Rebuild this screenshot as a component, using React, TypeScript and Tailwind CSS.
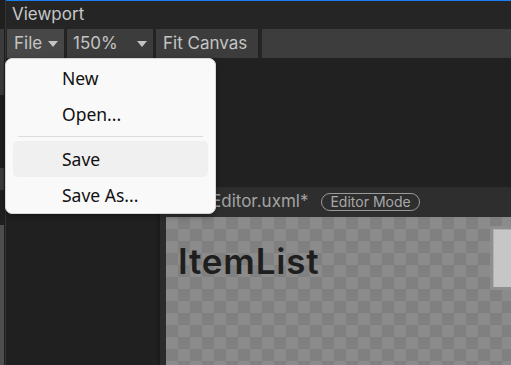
import React from "react";

function Caret() {
  return (
    <svg width="10" height="6" viewBox="0 0 10 6" className="shrink-0">
      <path d="M0 0 L10 0 L5 6 Z" fill="#c4c4c4" />
    </svg>
  );
}

const menuItems = [
  { label: "New" },
  { label: "Open..." },
  { sep: true },
  { label: "Save", active: true },
  { label: "Save As..." },
];

function FileMenu() {
  return (
    <div className="absolute left-[5px] top-[58px] w-[211px] h-[156px] rounded-[7px] bg-[#f9f9f9] border border-[#d6d6d6] shadow-[0_2px_6px_rgba(0,0,0,0.35)] pt-[1px] font-['Noto_Sans',sans-serif] text-[17.5px] text-[#111]">
      {menuItems.map((item, i) =>
        item.sep ? (
          <div key={i} className="h-[9px] flex items-center px-[12px]">
            <div className="h-px w-full bg-[#dcdcdc]" />
          </div>
        ) : (
          <div
            key={i}
            className={`mx-[7px] h-[36px] rounded-[5px] flex items-center pl-[49px] ${
              item.active ? "bg-[#f0f0f0]" : ""
            }`}
          >
            {item.label}
          </div>
        )
      )}
    </div>
  );
}

export default function App() {
  return (
    <div className="relative w-[511px] h-[365px] overflow-hidden bg-[#212121] flex font-['Inter',sans-serif] text-[#c4c4c4]">
      {/* neighbouring panel edge */}
      <div className="w-[6px] flex flex-col bg-[#1f1f1f] border-r border-[#333]">
        <div className="h-[29px]" />
        <div className="h-[66px] w-[4px] bg-[#3b3b3b]" />
        <div className="h-[73px]" />
        <div className="h-[22px] w-[4px] bg-[#3b3b3b]" />
        <div className="h-[35px]" />
        <div className="flex-1 w-[4px] bg-[#4e4e4e]" />
      </div>

      <div className="flex-1 flex flex-col min-w-0">
        <div className="h-px bg-[#1a7ef2]" />

        {/* title */}
        <div className="h-[28px] bg-[#252525] flex items-center pl-[6px] text-[17px] text-[#c8c8c8]">
          Viewport
        </div>

        {/* toolbar */}
        <div className="h-[29px] bg-[#232323] flex gap-[3px] pl-px">
          <div className="w-[57px] bg-[#474747] flex items-center gap-[6px] pl-[7px] text-[17px]">
            File
            <Caret />
          </div>
          <div className="w-[86px] bg-[#3c3c3c] flex items-center justify-between pl-[6px] pr-[6px] text-[17px]">
            150%
            <Caret />
          </div>
          <div className="w-[102px] bg-[#3c3c3c] flex items-center pl-[7px] text-[17px]">
            Fit Canvas
          </div>
          <div className="flex-1 ml-[-1px] border-l-2 border-[#262626] bg-[#3d3d3d]" />
        </div>

        {/* body */}
        <div className="flex-1 flex flex-col bg-[#212121]">
          <div className="h-[129px]" />
          <div className="flex-1 flex">
            <div className="w-[154px] bg-[#202020] border-r-[3px] border-[#1c1c1c]" />
            <div className="flex-1 flex flex-col bg-[#2b2b2b]">
              <div className="h-[30px] bg-[#2e2e2e] flex items-center gap-[10px] pl-[16px] text-[17px] text-[#a3a3a3] whitespace-nowrap">
                <span>ItemEditor.uxml*</span>
                <span className="h-[18px] ml-[3px] px-[8px] rounded-full border-[1.5px] border-[#9a9a9a] text-[14px] leading-none flex items-center text-[#a8a8a8]">
                  Editor Mode
                </span>
              </div>
              <div className="flex-1 ml-[6px] relative bg-[conic-gradient(#808080_25%,#8b8b8b_0_50%,#808080_0_75%,#8b8b8b_0)] bg-[length:24px_24px]">
                <div className="absolute left-[12px] top-[27px] text-[35px] font-semibold tracking-[0.8px] text-[#1e1e1e] leading-none">
                  ItemList
                </div>
                <div className="absolute left-[324px] top-[9px] w-[30px] h-[64px] border-[3px] border-[#8f8f8f]">
                  <div className="w-full h-full bg-[#c6c6c6] border-l border-t border-[#b0b0b0]" />
                </div>
              </div>
            </div>
          </div>
        </div>
      </div>

      <FileMenu />
    </div>
  );
}
